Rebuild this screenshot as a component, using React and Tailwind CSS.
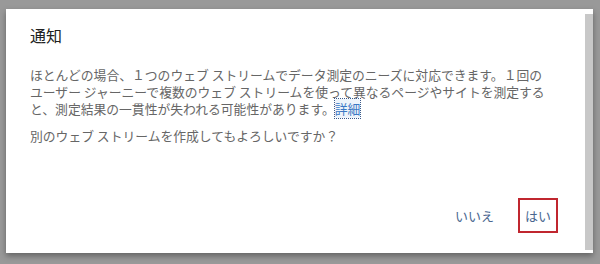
export default function App() {
  return (
    <div className="w-[600px] h-[264px] bg-[#999999] pt-[9px] pl-[6px] overflow-hidden font-['Noto_Sans_CJK_JP',sans-serif]">
      <div className="w-[587px] h-[244px] bg-white flex shadow-[0_3px_6px_rgba(0,0,0,0.35)]">
        <div className="flex-1 flex flex-col pl-[24px] pr-[20px]">
          <h2 className="mt-[14px] text-[16px] leading-[24px] text-[#222222]">通知</h2>
          <p className="mt-[19px] text-[12.8px] leading-[17px] text-[#666666] whitespace-nowrap">
            ほとんどの場合、１つのウェブ ストリームでデータ測定のニーズに対応できます。１回の
            <br />
            ユーザー ジャーニーで複数のウェブ ストリームを使って異なるページやサイトを測定する
            <br />
            と、測定結果の一貫性が失われる可能性があります。
            <span className="text-[#3b78c4] outline outline-1 outline-dotted outline-[#3b5a8a] bg-[#eef4fb]">詳細</span>
          </p>
          <p className="mt-[10px] text-[12.8px] leading-[17px] text-[#666666]">
            別のウェブ ストリームを作成してもよろしいですか？
          </p>
          <div className="mt-auto mb-[20px] flex justify-end items-center gap-[24px] pr-[6px]">
            <button className="text-[13px] text-[#4a6790]">いいえ</button>
            <button className="w-[40px] h-[35px] border-2 border-[#c0262f] text-[13px] text-[#4a6790] flex items-center justify-center">
              はい
            </button>
          </div>
        </div>
        <div className="w-[9px] mt-[5px] mb-[3px] bg-[#c8c8c8] border-l border-white" />
      </div>
    </div>
  );
}
